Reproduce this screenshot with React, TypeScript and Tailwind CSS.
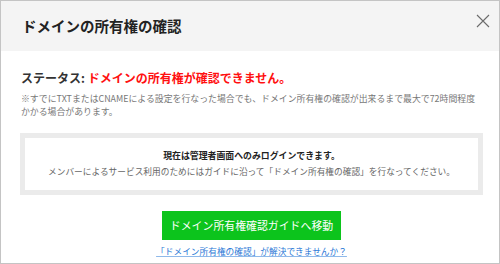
const JP = "font-['Noto_Sans_CJK_JP','Noto_Sans',sans-serif]";

function CloseIcon() {
  return (
    <svg width="14" height="14" viewBox="0 0 14 14" fill="none" className="block">
      <path d="M1 1L13 13M13 1L1 13" stroke="#6b6b6b" strokeWidth="1.1" />
    </svg>
  );
}

export default function App() {
  return (
    <div className={`${JP} w-[500px] h-[264px] bg-white border border-[#c4c4c4] flex flex-col overflow-hidden`}>
      {/* Header */}
      <div className="h-[50px] bg-[#f4f4f4] flex items-center justify-between pl-[21px] pr-[6px] shrink-0">
        <h1 className="text-[14.5px] font-bold text-[#222] leading-none">ドメインの所有権の確認</h1>
        <button className="w-[20px] h-[20px] flex items-center justify-center mb-[10px]">
          <CloseIcon />
        </button>
      </div>

      {/* Body */}
      <div className="flex flex-col pl-[19px] pr-[16px] pt-[19px]">
        <p className="pl-[1px] text-[12px] font-bold leading-[16px] text-[#333] whitespace-nowrap">
          ステータス: <span className="text-[#ff1010]">ドメインの所有権が確認できません。</span>
        </p>
        <div className="mt-[6px] pl-[1px] text-[8.9px] leading-[13px] text-[#777]">
          <p className="whitespace-nowrap">
            ※すでにTXTまたはCNAMEによる設定を行なった場合でも、ドメイン所有権の確認が出来るまで最大で72時間程度
          </p>
          <p className="whitespace-nowrap">かかる場合があります。</p>
        </div>

        <div className="mt-[15px] h-[62px] border-[5px] border-[#ebebeb] flex flex-col items-center justify-center gap-[2px] text-center">
          <p className="text-[8.9px] font-bold leading-[14px] text-[#222] whitespace-nowrap">
            現在は管理者画面へのみログインできます。
          </p>
          <p className="text-[8.7px] leading-[14px] text-[#666] whitespace-nowrap">
            メンバーによるサービス利用のためにはガイドに沿って「ドメイン所有権の確認」を行なってください。
          </p>
        </div>

        <div className="flex flex-col items-center">
          <button className="mt-[16px] w-[179px] h-[29px] bg-[#0cc41c] text-white text-[10.9px] leading-none flex items-center justify-center">
            ドメイン所有権確認ガイドへ移動
          </button>
          <a className="mt-[6px] text-[8.7px] leading-[12px] text-[#2a78d6] underline decoration-[#8fb9ea] whitespace-nowrap">
            「ドメイン所有権の確認」が解決できませんか？
          </a>
        </div>
      </div>
    </div>
  );
}
